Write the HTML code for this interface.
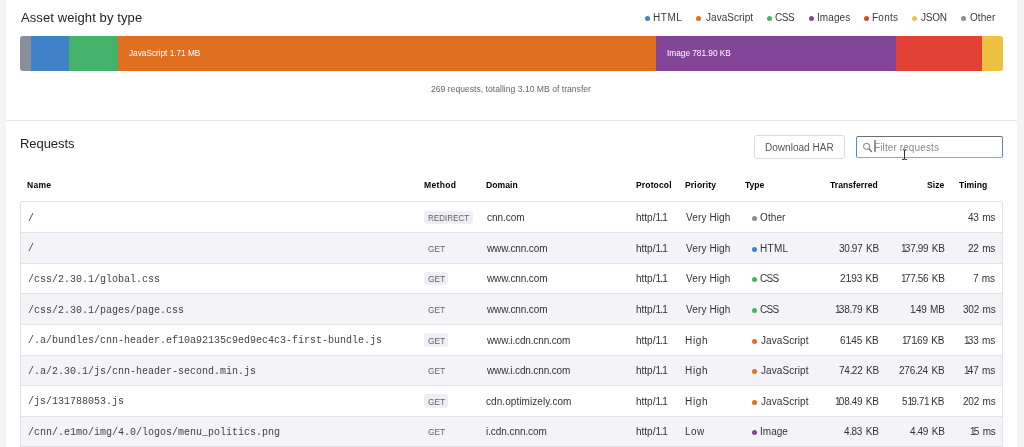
<!DOCTYPE html>
<html><head><meta charset="utf-8"><style>
html,body{margin:0;padding:0;}
body{width:1024px;height:447px;overflow:hidden;background:#f4f3f8;position:relative;font-family:'Liberation Sans',sans-serif;}
.t{position:absolute;line-height:0;white-space:nowrap;will-change:transform;}
.r{position:absolute;}
</style></head><body>
<div class="r" style="left:6.00px;top:0.00px;width:1011.00px;height:447.00px;background:#fff;"></div>
<div class="t" style="left:20.87px;top:18.00px;font-size:13px;color:#232323;letter-spacing:0.099px;">Asset weight by type</div>
<div class="r" style="left:645.20px;top:15.90px;width:5.00px;height:5.00px;border-radius:50%;background:#3f82c8;"></div>
<div class="t" style="left:653.38px;top:18.00px;font-size:10px;color:#3a3a3a;letter-spacing:0.544px;">HTML</div>
<div class="r" style="left:696.25px;top:15.90px;width:5.00px;height:5.00px;border-radius:50%;background:#e06f22;"></div>
<div class="t" style="left:705.64px;top:18.00px;font-size:10px;color:#3a3a3a;letter-spacing:0.049px;">JavaScript</div>
<div class="r" style="left:767.10px;top:15.90px;width:5.00px;height:5.00px;border-radius:50%;background:#45b26a;"></div>
<div class="t" style="left:775.49px;top:18.00px;font-size:10px;color:#3a3a3a;letter-spacing:-0.497px;">CSS</div>
<div class="r" style="left:808.50px;top:15.90px;width:5.00px;height:5.00px;border-radius:50%;background:#834597;"></div>
<div class="t" style="left:816.58px;top:18.00px;font-size:10px;color:#3a3a3a;letter-spacing:0.078px;">Images</div>
<div class="r" style="left:864.20px;top:15.90px;width:5.00px;height:5.00px;border-radius:50%;background:#e24035;"></div>
<div class="t" style="left:871.98px;top:18.00px;font-size:10px;color:#3a3a3a;letter-spacing:0.243px;">Fonts</div>
<div class="r" style="left:911.90px;top:15.90px;width:5.00px;height:5.00px;border-radius:50%;background:#edc142;"></div>
<div class="t" style="left:920.84px;top:18.00px;font-size:10px;color:#3a3a3a;letter-spacing:-0.199px;">JSON</div>
<div class="r" style="left:961.10px;top:15.90px;width:5.00px;height:5.00px;border-radius:50%;background:#898e99;"></div>
<div class="t" style="left:969.53px;top:18.00px;font-size:10px;color:#3a3a3a;letter-spacing:0.082px;">Other</div>
<div class="r" style="left:20px;top:36px;width:983px;height:35px;border-radius:3px;overflow:hidden;">
<div class="r" style="left:0.00px;top:0;width:10.60px;height:35px;background:#898e99;"></div>
<div class="r" style="left:10.60px;top:0;width:38.80px;height:35px;background:#3f82c8;"></div>
<div class="r" style="left:49.40px;top:0;width:48.70px;height:35px;background:#45b26a;"></div>
<div class="r" style="left:98.10px;top:0;width:538.10px;height:35px;background:#e06f22;"></div>
<div class="r" style="left:636.20px;top:0;width:239.70px;height:35px;background:#834597;"></div>
<div class="r" style="left:875.90px;top:0;width:86.30px;height:35px;background:#e24035;"></div>
<div class="r" style="left:962.20px;top:0;width:20.80px;height:35px;background:#edc142;"></div>
</div>
<div class="t" style="left:129.07px;top:53.00px;font-size:8.3px;color:#fff;letter-spacing:-0.035px;">JavaScript 1.71 MB</div>
<div class="t" style="left:666.53px;top:53.00px;font-size:8.3px;color:#fff;letter-spacing:-0.017px;">Image 781.90 KB</div>
<div class="t" style="left:430.97px;top:89.00px;font-size:8.6px;color:#666;letter-spacing:0.010px;">269 requests, totalling 3.10 MB of transfer</div>
<div class="r" style="left:6.00px;top:120.00px;width:1011.00px;height:1.00px;background:#e7e6eb;"></div>
<div class="t" style="left:19.83px;top:144.00px;font-size:13px;color:#232323;letter-spacing:-0.069px;">Requests</div>
<div class="r" style="left:754.20px;top:135.20px;width:91.00px;height:23.60px;box-sizing:border-box;border:1px solid #dcdbe0;border-radius:3px;background:#fff;"></div>
<div class="t" style="left:765.18px;top:148.00px;font-size:10px;color:#555;letter-spacing:0.029px;">Download HAR</div>
<div class="r" style="left:856.00px;top:136.40px;width:147.00px;height:21.20px;box-sizing:border-box;border:1px solid #4b8ed0;border-top-color:#6b6e74;border-right-color:#5a86b4;border-bottom-color:#58bde8;border-radius:2px;background:#fff;"></div>
<svg class="r" style="left:860px;top:140px" width="16" height="16" viewBox="0 0 16 16"><circle cx="6.6" cy="6.4" r="3.1" fill="none" stroke="#737373" stroke-width="0.95"/><line x1="8.9" y1="8.8" x2="11.5" y2="11.5" stroke="#666" stroke-width="1.25" stroke-linecap="round"/></svg>
<div class="r" style="left:874.40px;top:140.30px;width:1.20px;height:12.20px;background:#9a9a9a;"></div>
<div class="t" style="left:874.38px;top:148.00px;font-size:10px;color:#8a8a8a;letter-spacing:0.109px;">Filter requests</div>
<svg class="r" style="left:900px;top:146px" width="10" height="16" viewBox="0 0 10 16"><g fill="none" stroke-linecap="round"><path d="M3.1 3.6 q1.4 0 1.4 1 q0 -1 1.4 -1 M4.5 4.6 v8.4 M2.4 13.6 q2.1 0 2.1 -0.9 q0 0.9 2.1 0.9" stroke="#fff" stroke-width="1.9" opacity="0.6"/><path d="M3.1 3.6 q1.4 0 1.4 1 q0 -1 1.4 -1 M4.5 4.6 v8.4 M2.4 13.6 q2.1 0 2.1 -0.9 q0 0.9 2.1 0.9" stroke="#222" stroke-width="0.95"/></g></svg>
<div class="t" style="left:26.83px;top:185.00px;font-size:8.55px;color:#000;font-weight:700;letter-spacing:0.226px;">Name</div>
<div class="t" style="left:423.93px;top:185.00px;font-size:8.55px;color:#000;font-weight:700;letter-spacing:0.309px;">Method</div>
<div class="t" style="left:486.33px;top:185.00px;font-size:8.55px;color:#000;font-weight:700;letter-spacing:0.070px;">Domain</div>
<div class="t" style="left:636.13px;top:185.00px;font-size:8.55px;color:#000;font-weight:700;letter-spacing:0.129px;">Protocol</div>
<div class="t" style="left:685.03px;top:185.00px;font-size:8.55px;color:#000;font-weight:700;letter-spacing:0.169px;">Priority</div>
<div class="t" style="left:745.20px;top:185.00px;font-size:8.55px;color:#000;font-weight:700;letter-spacing:-0.022px;">Type</div>
<div class="t" style="left:830.40px;top:185.00px;font-size:8.55px;color:#000;font-weight:700;letter-spacing:0.064px;">Transferred</div>
<div class="t" style="left:926.95px;top:185.00px;font-size:8.55px;color:#000;font-weight:700;letter-spacing:0.043px;">Size</div>
<div class="t" style="left:958.80px;top:185.00px;font-size:8.55px;color:#000;font-weight:700;letter-spacing:0.069px;">Timing</div>
<div class="r" style="left:20.00px;top:201.30px;width:983.00px;height:30.64px;background:#fff;"></div>
<div class="t" style="left:27.74px;top:219.00px;font-size:10px;color:#434343;font-family:'Liberation Mono', monospace;">/</div>
<div class="r" style="left:424.20px;top:210.60px;width:48.50px;height:13.50px;background:#efeef4;border-radius:3px;"></div>
<div class="t" style="left:427.64px;top:218.00px;font-size:9.3px;color:#5f5f66;transform:scaleX(0.8677);transform-origin:0 0;">REDIRECT</div>
<div class="t" style="left:487.08px;top:218.00px;font-size:10px;color:#333;letter-spacing:-0.035px;">cnn.com</div>
<div class="t" style="left:636.11px;top:218.00px;font-size:10px;color:#333;">http/<span style="letter-spacing:-0.75px">1.1</span></div>
<div class="t" style="left:685.86px;top:218.00px;font-size:10px;color:#333;letter-spacing:0.123px;">Very High</div>
<div class="r" style="left:751.80px;top:216.00px;width:5.00px;height:5.00px;border-radius:50%;background:#898e99;"></div>
<div class="t" style="left:760.23px;top:218.00px;font-size:10px;color:#333;letter-spacing:0.107px;">Other</div>
<div class="t" style="left:968.03px;top:218.00px;font-size:10px;color:#333;letter-spacing:-0.190px;">43<span style="letter-spacing:0.670px"> </span>ms</div>
<div class="r" style="left:20.00px;top:231.94px;width:983.00px;height:30.64px;background:#f4f3f7;"></div>
<div class="t" style="left:27.74px;top:249.00px;font-size:10px;color:#434343;font-family:'Liberation Mono', monospace;">/</div>
<div class="t" style="left:427.88px;top:249.00px;font-size:9.3px;color:#5f5f66;transform:scaleX(0.8895);transform-origin:0 0;">GET</div>
<div class="t" style="left:486.81px;top:249.00px;font-size:10px;color:#333;letter-spacing:-0.119px;">www.cnn.com</div>
<div class="t" style="left:636.11px;top:249.00px;font-size:10px;color:#333;">http/<span style="letter-spacing:-0.75px">1.1</span></div>
<div class="t" style="left:685.86px;top:249.00px;font-size:10px;color:#333;letter-spacing:0.123px;">Very High</div>
<div class="r" style="left:751.80px;top:247.00px;width:5.00px;height:5.00px;border-radius:50%;background:#3f82c8;"></div>
<div class="t" style="left:759.88px;top:249.00px;font-size:10px;color:#333;letter-spacing:0.310px;">HTML</div>
<div class="t" style="left:838.55px;top:249.00px;font-size:10px;color:#333;letter-spacing:-0.190px;">30<span style="letter-spacing:-0.690px">.</span>97<span style="letter-spacing:0.670px"> </span>KB</div>
<div class="t" style="left:900.74px;top:249.00px;font-size:10px;color:#333;letter-spacing:-0.190px;"><span style="letter-spacing:-1.750px">1</span>37<span style="letter-spacing:-0.690px">.</span>99<span style="letter-spacing:0.670px"> </span>KB</div>
<div class="t" style="left:968.03px;top:249.00px;font-size:10px;color:#333;letter-spacing:-0.190px;">22<span style="letter-spacing:0.670px"> </span>ms</div>
<div class="r" style="left:20.00px;top:262.58px;width:983.00px;height:30.64px;background:#fff;"></div>
<div class="t" style="left:27.74px;top:280.00px;font-size:10px;color:#434343;font-family:'Liberation Mono', monospace;">/css/2.30.1/global.css</div>
<div class="r" style="left:424.20px;top:271.88px;width:23.70px;height:13.50px;background:#efeef4;border-radius:3px;"></div>
<div class="t" style="left:427.88px;top:279.00px;font-size:9.3px;color:#5f5f66;transform:scaleX(0.8895);transform-origin:0 0;">GET</div>
<div class="t" style="left:486.81px;top:279.00px;font-size:10px;color:#333;letter-spacing:-0.119px;">www.cnn.com</div>
<div class="t" style="left:636.11px;top:279.00px;font-size:10px;color:#333;">http/<span style="letter-spacing:-0.75px">1.1</span></div>
<div class="t" style="left:685.86px;top:279.00px;font-size:10px;color:#333;letter-spacing:0.123px;">Very High</div>
<div class="r" style="left:751.80px;top:277.00px;width:5.00px;height:5.00px;border-radius:50%;background:#45b26a;"></div>
<div class="t" style="left:760.19px;top:279.00px;font-size:10px;color:#333;letter-spacing:-0.647px;">CSS</div>
<div class="t" style="left:840.11px;top:279.00px;font-size:10px;color:#333;letter-spacing:-0.190px;">2<span style="letter-spacing:-1.750px">1</span><span style="letter-spacing:-0.690px">.</span>93<span style="letter-spacing:0.670px"> </span>KB</div>
<div class="t" style="left:900.74px;top:279.00px;font-size:10px;color:#333;letter-spacing:-0.190px;"><span style="letter-spacing:-1.750px">1</span>77<span style="letter-spacing:-0.690px">.</span>56<span style="letter-spacing:0.670px"> </span>KB</div>
<div class="t" style="left:973.40px;top:279.00px;font-size:10px;color:#333;letter-spacing:-0.190px;">7<span style="letter-spacing:0.670px"> </span>ms</div>
<div class="r" style="left:20.00px;top:293.22px;width:983.00px;height:30.64px;background:#f4f3f7;"></div>
<div class="t" style="left:27.74px;top:311.00px;font-size:10px;color:#434343;font-family:'Liberation Mono', monospace;">/css/2.30.1/pages/page.css</div>
<div class="t" style="left:427.88px;top:310.00px;font-size:9.3px;color:#5f5f66;transform:scaleX(0.8895);transform-origin:0 0;">GET</div>
<div class="t" style="left:486.81px;top:310.00px;font-size:10px;color:#333;letter-spacing:-0.119px;">www.cnn.com</div>
<div class="t" style="left:636.11px;top:310.00px;font-size:10px;color:#333;">http/<span style="letter-spacing:-0.75px">1.1</span></div>
<div class="t" style="left:685.86px;top:310.00px;font-size:10px;color:#333;letter-spacing:0.123px;">Very High</div>
<div class="r" style="left:751.80px;top:308.00px;width:5.00px;height:5.00px;border-radius:50%;background:#45b26a;"></div>
<div class="t" style="left:760.19px;top:310.00px;font-size:10px;color:#333;letter-spacing:-0.647px;">CSS</div>
<div class="t" style="left:834.74px;top:310.00px;font-size:10px;color:#333;letter-spacing:-0.190px;"><span style="letter-spacing:-1.750px">1</span>38<span style="letter-spacing:-0.690px">.</span>79<span style="letter-spacing:0.670px"> </span>KB</div>
<div class="t" style="left:909.83px;top:310.00px;font-size:10px;color:#333;letter-spacing:-0.190px;"><span style="letter-spacing:-1.750px">1</span><span style="letter-spacing:-0.690px">.</span>49<span style="letter-spacing:0.670px"> </span>MB</div>
<div class="t" style="left:962.66px;top:310.00px;font-size:10px;color:#333;letter-spacing:-0.190px;">302<span style="letter-spacing:0.670px"> </span>ms</div>
<div class="r" style="left:20.00px;top:323.86px;width:983.00px;height:30.64px;background:#fff;"></div>
<div class="t" style="left:27.74px;top:341.00px;font-size:10px;color:#434343;font-family:'Liberation Mono', monospace;">/.a/bundles/cnn-header.ef10a92135c9ed9ec4c3-first-bundle.js</div>
<div class="r" style="left:424.20px;top:333.16px;width:23.70px;height:13.50px;background:#efeef4;border-radius:3px;"></div>
<div class="t" style="left:427.88px;top:341.00px;font-size:9.3px;color:#5f5f66;transform:scaleX(0.8895);transform-origin:0 0;">GET</div>
<div class="t" style="left:486.81px;top:341.00px;font-size:10px;color:#333;letter-spacing:-0.143px;">www.i.cdn.cnn.com</div>
<div class="t" style="left:636.11px;top:341.00px;font-size:10px;color:#333;">http/<span style="letter-spacing:-0.75px">1.1</span></div>
<div class="t" style="left:685.08px;top:341.00px;font-size:10px;color:#333;letter-spacing:0.701px;">High</div>
<div class="r" style="left:751.80px;top:339.00px;width:5.00px;height:5.00px;border-radius:50%;background:#e06f22;"></div>
<div class="t" style="left:760.54px;top:341.00px;font-size:10px;color:#333;letter-spacing:0.083px;">JavaScript</div>
<div class="t" style="left:840.11px;top:341.00px;font-size:10px;color:#333;letter-spacing:-0.190px;">6<span style="letter-spacing:-1.750px">1</span><span style="letter-spacing:-0.690px">.</span>45<span style="letter-spacing:0.670px"> </span>KB</div>
<div class="t" style="left:902.30px;top:341.00px;font-size:10px;color:#333;letter-spacing:-0.190px;"><span style="letter-spacing:-1.750px">1</span>7<span style="letter-spacing:-1.750px">1</span><span style="letter-spacing:-0.690px">.</span>69<span style="letter-spacing:0.670px"> </span>KB</div>
<div class="t" style="left:964.22px;top:341.00px;font-size:10px;color:#333;letter-spacing:-0.190px;"><span style="letter-spacing:-1.750px">1</span>33<span style="letter-spacing:0.670px"> </span>ms</div>
<div class="r" style="left:20.00px;top:354.50px;width:983.00px;height:30.64px;background:#f4f3f7;"></div>
<div class="t" style="left:27.74px;top:372.00px;font-size:10px;color:#434343;font-family:'Liberation Mono', monospace;">/.a/2.30.1/js/cnn-header-second.min.js</div>
<div class="t" style="left:427.88px;top:371.00px;font-size:9.3px;color:#5f5f66;transform:scaleX(0.8895);transform-origin:0 0;">GET</div>
<div class="t" style="left:486.81px;top:371.00px;font-size:10px;color:#333;letter-spacing:-0.143px;">www.i.cdn.cnn.com</div>
<div class="t" style="left:636.11px;top:371.00px;font-size:10px;color:#333;">http/<span style="letter-spacing:-0.75px">1.1</span></div>
<div class="t" style="left:685.08px;top:371.00px;font-size:10px;color:#333;letter-spacing:0.701px;">High</div>
<div class="r" style="left:751.80px;top:369.00px;width:5.00px;height:5.00px;border-radius:50%;background:#e06f22;"></div>
<div class="t" style="left:760.54px;top:371.00px;font-size:10px;color:#333;letter-spacing:0.083px;">JavaScript</div>
<div class="t" style="left:838.55px;top:371.00px;font-size:10px;color:#333;letter-spacing:-0.190px;">74<span style="letter-spacing:-0.690px">.</span>22<span style="letter-spacing:0.670px"> </span>KB</div>
<div class="t" style="left:899.18px;top:371.00px;font-size:10px;color:#333;letter-spacing:-0.190px;">276<span style="letter-spacing:-0.690px">.</span>24<span style="letter-spacing:0.670px"> </span>KB</div>
<div class="t" style="left:964.22px;top:371.00px;font-size:10px;color:#333;letter-spacing:-0.190px;"><span style="letter-spacing:-1.750px">1</span>47<span style="letter-spacing:0.670px"> </span>ms</div>
<div class="r" style="left:20.00px;top:385.14px;width:983.00px;height:30.64px;background:#fff;"></div>
<div class="t" style="left:27.74px;top:402.00px;font-size:10px;color:#434343;font-family:'Liberation Mono', monospace;">/js/131788053.js</div>
<div class="r" style="left:424.20px;top:394.44px;width:23.70px;height:13.50px;background:#efeef4;border-radius:3px;"></div>
<div class="t" style="left:427.88px;top:402.00px;font-size:9.3px;color:#5f5f66;transform:scaleX(0.8895);transform-origin:0 0;">GET</div>
<div class="t" style="left:486.38px;top:402.00px;font-size:10px;color:#333;letter-spacing:0.068px;">cdn.optimizely.com</div>
<div class="t" style="left:636.11px;top:402.00px;font-size:10px;color:#333;">http/<span style="letter-spacing:-0.75px">1.1</span></div>
<div class="t" style="left:685.08px;top:402.00px;font-size:10px;color:#333;letter-spacing:0.701px;">High</div>
<div class="r" style="left:751.80px;top:400.00px;width:5.00px;height:5.00px;border-radius:50%;background:#e06f22;"></div>
<div class="t" style="left:760.54px;top:402.00px;font-size:10px;color:#333;letter-spacing:0.083px;">JavaScript</div>
<div class="t" style="left:834.74px;top:402.00px;font-size:10px;color:#333;letter-spacing:-0.190px;"><span style="letter-spacing:-1.750px">1</span>08<span style="letter-spacing:-0.690px">.</span>49<span style="letter-spacing:0.670px"> </span>KB</div>
<div class="t" style="left:902.30px;top:402.00px;font-size:10px;color:#333;letter-spacing:-0.190px;">5<span style="letter-spacing:-1.750px">1</span>9<span style="letter-spacing:-0.690px">.</span>7<span style="letter-spacing:-1.750px">1</span><span style="letter-spacing:0.670px"> </span>KB</div>
<div class="t" style="left:962.66px;top:402.00px;font-size:10px;color:#333;letter-spacing:-0.190px;">202<span style="letter-spacing:0.670px"> </span>ms</div>
<div class="r" style="left:20.00px;top:415.78px;width:983.00px;height:30.64px;background:#f4f3f7;"></div>
<div class="t" style="left:27.74px;top:433.00px;font-size:10px;color:#434343;font-family:'Liberation Mono', monospace;">/cnn/.e1mo/img/4.0/logos/menu_politics.png</div>
<div class="t" style="left:427.88px;top:432.00px;font-size:9.3px;color:#5f5f66;transform:scaleX(0.8895);transform-origin:0 0;">GET</div>
<div class="t" style="left:486.13px;top:432.00px;font-size:10px;color:#333;letter-spacing:-0.072px;">i.cdn.cnn.com</div>
<div class="t" style="left:636.11px;top:432.00px;font-size:10px;color:#333;">http/<span style="letter-spacing:-0.75px">1.1</span></div>
<div class="t" style="left:685.08px;top:432.00px;font-size:10px;color:#333;letter-spacing:0.376px;">Low</div>
<div class="r" style="left:751.80px;top:430.00px;width:5.00px;height:5.00px;border-radius:50%;background:#834597;"></div>
<div class="t" style="left:759.78px;top:432.00px;font-size:10px;color:#333;letter-spacing:0.019px;">Image</div>
<div class="t" style="left:843.93px;top:432.00px;font-size:10px;color:#333;letter-spacing:-0.190px;">4<span style="letter-spacing:-0.690px">.</span>83<span style="letter-spacing:0.670px"> </span>KB</div>
<div class="t" style="left:909.93px;top:432.00px;font-size:10px;color:#333;letter-spacing:-0.190px;">4<span style="letter-spacing:-0.690px">.</span>49<span style="letter-spacing:0.670px"> </span>KB</div>
<div class="t" style="left:969.59px;top:432.00px;font-size:10px;color:#333;letter-spacing:-0.190px;"><span style="letter-spacing:-1.750px">1</span>5<span style="letter-spacing:0.670px"> </span>ms</div>
<div class="r" style="left:20.00px;top:231.94px;width:983.00px;height:1.00px;background:#e3e2e8;"></div>
<div class="r" style="left:20.00px;top:262.58px;width:983.00px;height:1.00px;background:#e3e2e8;"></div>
<div class="r" style="left:20.00px;top:293.22px;width:983.00px;height:1.00px;background:#e3e2e8;"></div>
<div class="r" style="left:20.00px;top:323.86px;width:983.00px;height:1.00px;background:#e3e2e8;"></div>
<div class="r" style="left:20.00px;top:354.50px;width:983.00px;height:1.00px;background:#e3e2e8;"></div>
<div class="r" style="left:20.00px;top:385.14px;width:983.00px;height:1.00px;background:#e3e2e8;"></div>
<div class="r" style="left:20.00px;top:415.78px;width:983.00px;height:1.00px;background:#e3e2e8;"></div>
<div class="r" style="left:20.00px;top:446.00px;width:983.00px;height:1.00px;background:#e3e2e8;"></div>
<div class="r" style="left:20.00px;top:201.00px;width:983.00px;height:260.00px;box-sizing:border-box;border:1px solid #e3e2e8;border-radius:2px;"></div>
</body></html>
